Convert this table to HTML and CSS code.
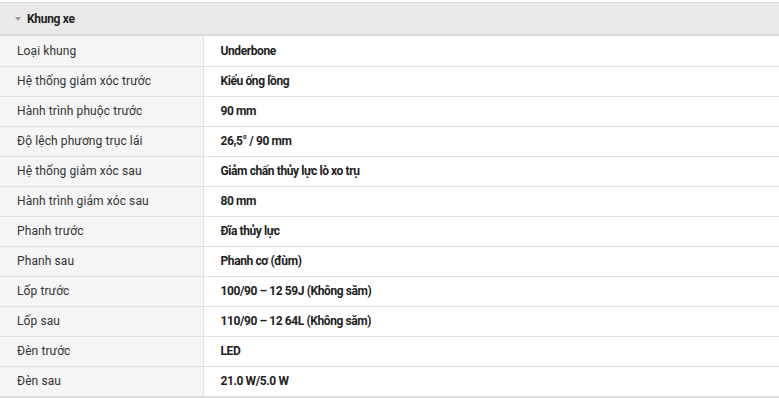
FILE: index.html
```html
<!DOCTYPE html>
<html lang="vi">
<head>
<meta charset="utf-8">
<link rel="stylesheet" href="styles.css">
</head>
<body>
<div class="spec">
  <div class="spec-head"><span class="caret"></span>Khung xe</div>
  <table class="spec-table">
    <tr><td class="k">Loại khung</td><td class="v">Underbone</td></tr>
    <tr><td class="k">Hệ thống giảm xóc trước</td><td class="v">Kiểu ống lồng</td></tr>
    <tr><td class="k">Hành trình phuộc trước</td><td class="v">90 mm</td></tr>
    <tr><td class="k">Độ lệch phương trục lái</td><td class="v">26,5° / 90 mm</td></tr>
    <tr><td class="k">Hệ thống giảm xóc sau</td><td class="v">Giảm chấn thủy lực lò xo trụ</td></tr>
    <tr><td class="k">Hành trình giảm xóc sau</td><td class="v">80 mm</td></tr>
    <tr><td class="k">Phanh trước</td><td class="v">Đĩa thủy lực</td></tr>
    <tr><td class="k">Phanh sau</td><td class="v">Phanh cơ (đùm)</td></tr>
    <tr><td class="k">Lốp trước</td><td class="v">100/90 – 12 59J (Không săm)</td></tr>
    <tr><td class="k">Lốp sau</td><td class="v">110/90 – 12 64L (Không săm)</td></tr>
    <tr><td class="k">Đèn trước</td><td class="v">LED</td></tr>
    <tr><td class="k">Đèn sau</td><td class="v">21.0 W/5.0 W</td></tr>
  </table>
</div>
</body>
</html>
```
FILE: styles.css
```css
html, body {
  margin: 0;
  padding: 0;
  background: #fff;
}
body {
  font-family: Roboto, "Liberation Sans", sans-serif;
  color: #222;
  padding-top: 2px;
}
.spec {
  width: 779px;
  border-top: 1px solid #dcdcdc;
  border-bottom: 2px solid #dcdcdc;
}
.spec-head {
  height: 33px;
  box-sizing: border-box;
  background: #ebe9e9;
  border-bottom: 2px solid #dcdcdc;
  display: flex;
  align-items: center;
  padding-left: 15px;
  padding-top: 1px;
  font-size: 12px;
  font-weight: 700;
  letter-spacing: -0.3px;
  color: #222;
}
.caret {
  width: 0;
  height: 0;
  border-left: 3.5px solid transparent;
  border-right: 3.5px solid transparent;
  border-top: 4px solid #999;
  margin-right: 6px;
}
.spec-table {
  width: 100%;
  border-collapse: collapse;
  font-size: 12px;
}
.spec-table tr + tr td {
  border-top: 1px solid #e0e0e0;
}
.spec-table td {
  height: 30px;
  box-sizing: border-box;
  padding: 0 0 0 17px;
  vertical-align: middle;
}
.spec-table td.k {
  width: 203px;
  background: #f5f5f5;
  border-right: 1px solid #e3e3e3;
  color: #333;
  letter-spacing: 0.1px;
}
.spec-table td.v {
  font-weight: 700;
  font-size: 12px;
  letter-spacing: -0.4px;
  color: #222;
}
```
